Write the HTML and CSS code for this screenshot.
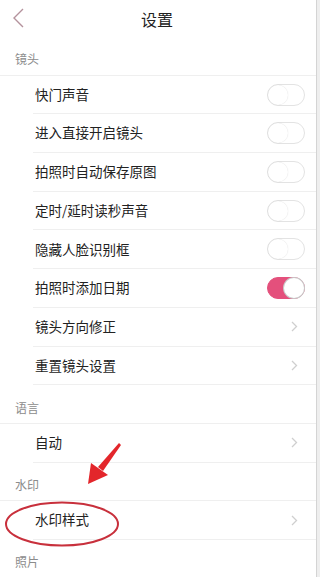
FILE: index.html
```html
<!DOCTYPE html>
<html lang="zh-CN">
<head>
<meta charset="utf-8">
<title>设置</title>
<link rel="stylesheet" href="styles.css">
</head>
<body>
<div class="page">
  <header class="header">
    <svg class="back" width="14" height="20" viewBox="0 0 14 20"><path d="M11 1 L2 10 L11 19" fill="none" stroke="#b4929c" stroke-width="1.4"/></svg>
    <h1 class="title">设置</h1>
  </header>

  <div class="section">镜头</div>
  <div class="row"><span class="label">快门声音</span><span class="switch"></span></div>
  <div class="row"><span class="label">进入直接开启镜头</span><span class="switch"></span></div>
  <div class="row"><span class="label">拍照时自动保存原图</span><span class="switch"></span></div>
  <div class="row"><span class="label">定时/延时读秒声音</span><span class="switch"></span></div>
  <div class="row"><span class="label">隐藏人脸识别框</span><span class="switch"></span></div>
  <div class="row"><span class="label">拍照时添加日期</span><span class="switch on"></span></div>
  <div class="row link"><span class="label">镜头方向修正</span><svg class="chev" width="7" height="11" viewBox="0 0 7 11"><path d="M1 1 L5.5 5.5 L1 10" fill="none" stroke="#cfcfcf" stroke-width="1.3"/></svg></div>
  <div class="row link"><span class="label">重置镜头设置</span><svg class="chev" width="7" height="11" viewBox="0 0 7 11"><path d="M1 1 L5.5 5.5 L1 10" fill="none" stroke="#cfcfcf" stroke-width="1.3"/></svg></div>

  <div class="section">语言</div>
  <div class="row link"><span class="label">自动</span><svg class="chev" width="7" height="11" viewBox="0 0 7 11"><path d="M1 1 L5.5 5.5 L1 10" fill="none" stroke="#cfcfcf" stroke-width="1.3"/></svg></div>

  <div class="section">水印</div>
  <div class="row link"><span class="label">水印样式</span><svg class="chev" width="7" height="11" viewBox="0 0 7 11"><path d="M1 1 L5.5 5.5 L1 10" fill="none" stroke="#cfcfcf" stroke-width="1.3"/></svg></div>

  <div class="section">照片</div>

  <svg class="annot" width="320" height="577" viewBox="0 0 320 577">
    <polygon points="119,443 121,445 103,471 98,467" fill="#e3262b"/>
    <polygon points="88,484 91,463 108,475" fill="#e3262b"/>
    <ellipse cx="62" cy="524" rx="56" ry="21.5" fill="none" stroke="#c8303c" stroke-width="2"/>
  </svg>
</div>
</body>
</html>
```

FILE: styles.css
```css
* { box-sizing: border-box; margin: 0; padding: 0; }
html, body { background: #eeeeee; }
body {
  width: 320px;
  height: 577px;
  overflow: hidden;
  font-family: "Noto Sans CJK SC", "Noto Sans", sans-serif;
}
.page {
  position: relative;
  width: 317px;
  height: 577px;
  background: #ffffff;
  border-right: 1px solid #d4d4d4;
  overflow: hidden;
}
.header {
  height: 37px;
  display: flex;
  align-items: center;
  justify-content: center;
  position: relative;
}
.back {
  position: absolute;
  left: 12px;
  top: 8px;
}
.title {
  font-size: 16px;
  font-weight: 400;
  color: #222222;
  line-height: 1;
  margin-left: -2px;
}
.section {
  height: 38.7px;
  display: flex;
  align-items: center;
  padding-left: 15px;
  padding-top: 6px;
  font-size: 12px;
  color: #8c8c8c;
  border-bottom: 1px solid #efefef;
}
.row {
  height: 38.7px;
  margin-left: 33px;
  padding-left: 2px;
  padding-right: 11px;
  display: flex;
  align-items: center;
  justify-content: space-between;
  border-bottom: 1px solid #efefef;
}
.row.link { padding-right: 18px; }
.label {
  font-size: 13.5px;
  color: #222222;
  line-height: 1;
}
.switch {
  position: relative;
  width: 38px;
  height: 22px;
  border-radius: 11px;
  border: 1px solid #e3e3e3;
  background: #ffffff;
}
.switch::after {
  content: "";
  position: absolute;
  left: 0;
  top: 0;
  width: 20px;
  height: 20px;
  border-radius: 50%;
  background: #ffffff;
  box-shadow: 0 0 1px rgba(0,0,0,0.18);
}
.switch.on {
  background: #e4507c;
  border-color: #e4507c;
}
.switch.on::after {
  left: auto;
  right: 0;
  box-shadow: 0 0 0 1px #c9c9c9;
}
.annot {
  position: absolute;
  left: 0;
  top: 0;
  pointer-events: none;
}
```
